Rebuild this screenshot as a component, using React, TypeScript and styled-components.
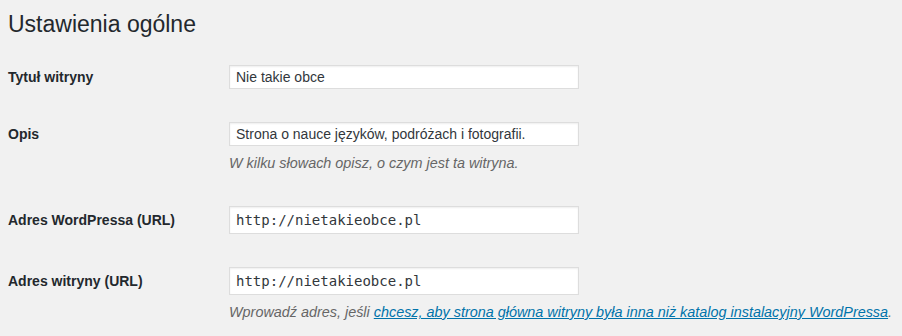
import styled, { createGlobalStyle } from 'styled-components';

const GlobalStyle = createGlobalStyle`
  html, body {
    margin: 0;
    padding: 0;
    background: #f1f1f1;
  }
  body {
    font-family: "Liberation Sans", Arial, sans-serif;
    color: #23282d;
  }
`;

const Page = styled.div`
  width: 902px;
  height: 336px;
  box-sizing: border-box;
  padding: 0 8px;
  overflow: hidden;
  background: #f1f1f1;
`;

const Heading = styled.h1`
  margin: 0;
  padding: 10px 0 0;
  height: 49px;
  box-sizing: border-box;
  font-size: 23px;
  line-height: 29px;
  font-weight: 400;
  color: #23282d;
`;

const Row = styled.div`
  display: grid;
  grid-template-columns: 221px 1fr;
  align-items: start;
  padding: 16px 0 17px;
`;

const Label = styled.label<{ $h: number }>`
  height: ${(p) => p.$h}px;
  display: flex;
  align-items: center;
  font-size: 14px;
  font-weight: 700;
  color: #23282d;
`;

const Field = styled.div`
  display: flex;
  flex-direction: column;
`;

const Input = styled.input<{ $mono?: boolean; $h: number }>`
  width: 350px;
  height: ${(p) => p.$h}px;
  box-sizing: border-box;
  margin: 0;
  padding: 0 6px;
  background: #fff;
  border: 1px solid #ddd;
  box-shadow: inset 0 1px 2px rgba(0, 0, 0, 0.07);
  font-family: ${(p) =>
    p.$mono ? '"DejaVu Sans Mono", "Liberation Mono", monospace' : '"Liberation Sans", Arial, sans-serif'};
  font-size: 14px;
  color: #32373c;
  outline: none;
`;

const Description = styled.p`
  margin: 8px 0 0;
  font-size: 14.4px;
  line-height: 19px;
  font-style: italic;
  color: #666;
  white-space: nowrap;

  a {
    color: #0073aa;
    text-decoration: underline;
  }
`;

function App() {
  return (
    <Page>
      <GlobalStyle />
      <Heading>Ustawienia ogólne</Heading>

      <Row>
        <Label $h={24}>Tytuł witryny</Label>
        <Field>
          <Input $h={24} readOnly value="Nie takie obce" />
        </Field>
      </Row>

      <Row>
        <Label $h={24}>Opis</Label>
        <Field>
          <Input $h={24} readOnly value="Strona o nauce języków, podróżach i fotografii." />
          <Description>W kilku słowach opisz, o czym jest ta witryna.</Description>
        </Field>
      </Row>

      <Row>
        <Label $h={28}>Adres WordPressa (URL)</Label>
        <Field>
          <Input $h={28} $mono readOnly value="http://nietakieobce.pl" />
        </Field>
      </Row>

      <Row>
        <Label $h={28}>Adres witryny (URL)</Label>
        <Field>
          <Input $h={28} $mono readOnly value="http://nietakieobce.pl" />
          <Description>
            Wprowadź adres, jeśli{' '}
            <a href="#">chcesz, aby strona główna witryny była inna niż katalog instalacyjny WordPressa</a>.
          </Description>
        </Field>
      </Row>
    </Page>
  );
}

export default App;
